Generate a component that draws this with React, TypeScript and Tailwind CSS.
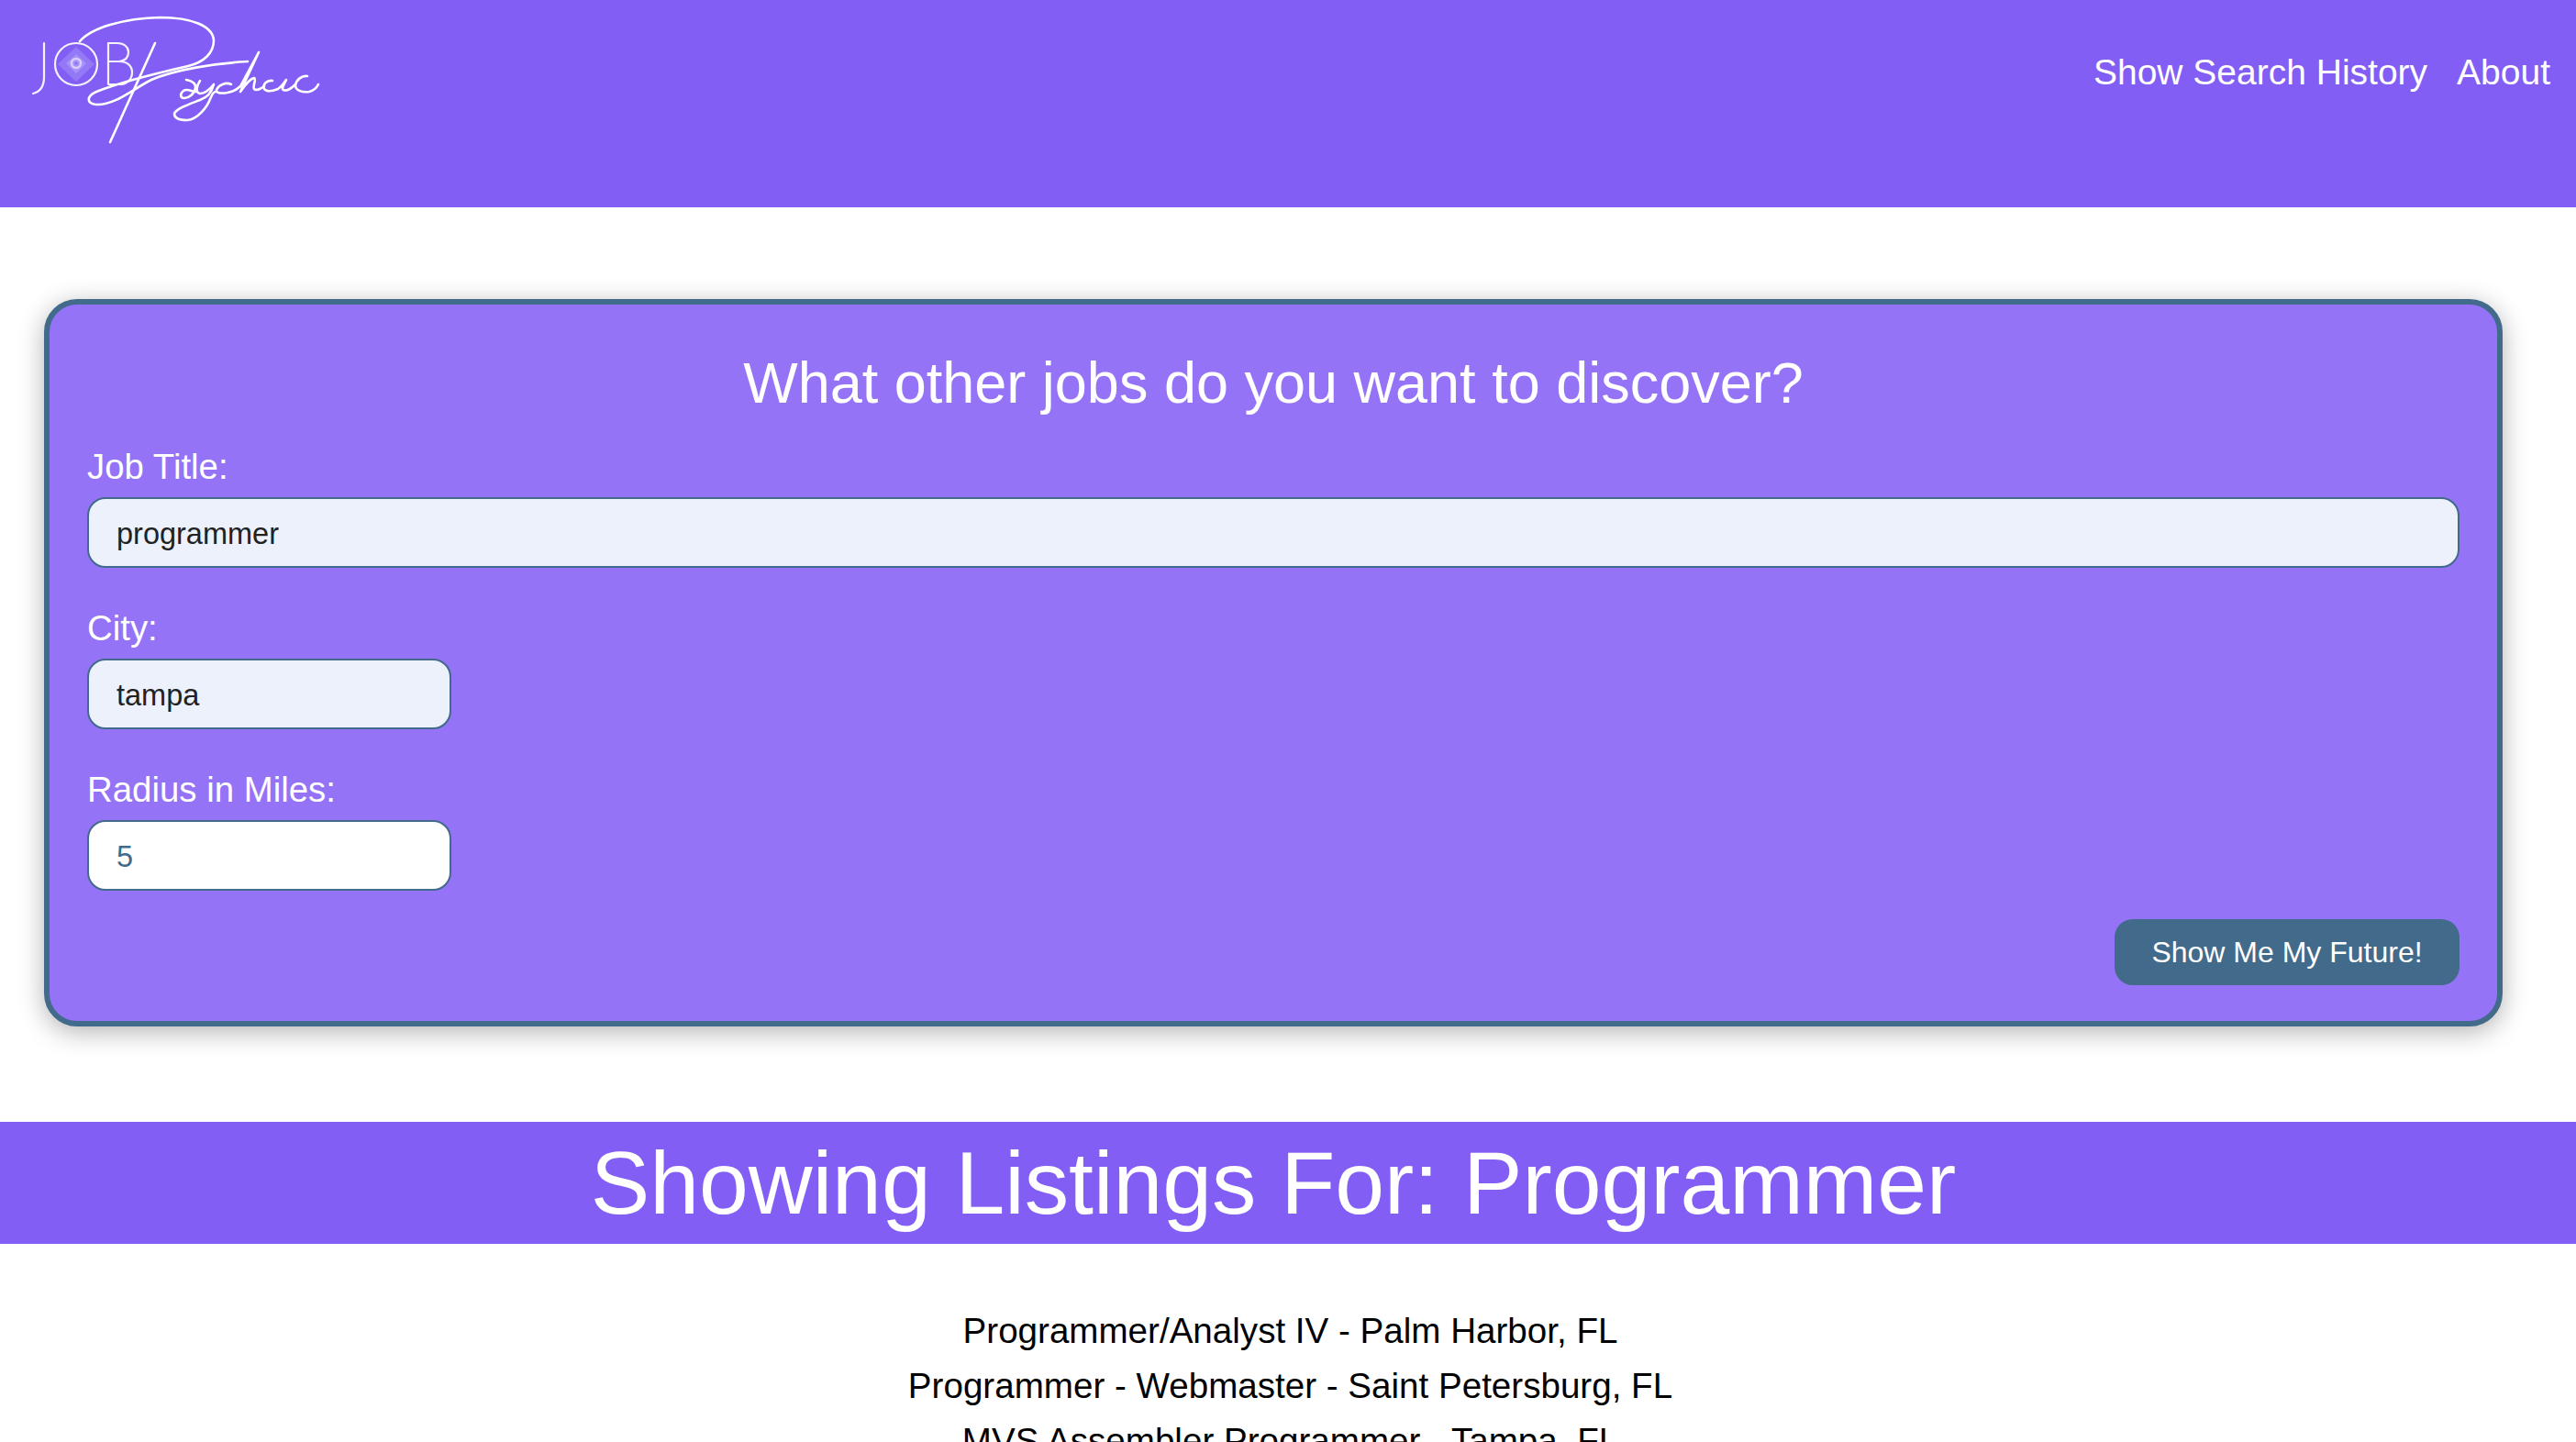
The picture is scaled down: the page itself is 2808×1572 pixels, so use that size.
const jobs = [
  "Programmer/Analyst IV - Palm Harbor, FL",
  "Programmer - Webmaster - Saint Petersburg, FL",
  "MVS Assembler Programmer - Tampa, FL",
];

function Logo() {
  return (
    <svg width="400" height="180" viewBox="0 0 400 180" fill="none" stroke="#ffffff" strokeLinecap="round" strokeLinejoin="round" className="shrink-0 blur-[0.4px]">
      <path d="M83 51 L103 70 L83 89 L63 70 Z" fill="#9479f6" stroke="none" />
      <path d="M83 59 L94 69 L83 80 L72 69 Z" fill="#a892f9" stroke="none" />
      <circle cx="83" cy="69" r="5" stroke="#d8cdfd" strokeWidth="2.4" />
      <circle cx="83" cy="69" r="1.5" fill="#8a6cf6" stroke="none" />
      <g strokeWidth="2.2" opacity="0.92">
        <path d="M48 47 V84 C48 94 44 100 36 102" />
        <circle cx="83" cy="70" r="23" />
        <path d="M118 47 V92 H130 C139 92 144 86 144 79 C144 72 139 67 130 67 H118 M130 67 C137 66 140 62 140 57 C140 51 135 47 128 47 H118" />
      </g>
      <g strokeWidth="2.6">
        <path d="M87 45 C100 30 135 20 175 19 C208 19 232 28 233 44 C233 58 222 68 205 72 C170 80 130 90 105 100 C94 105 94 113 105 114 C125 115 145 97 165 87 C190 76 235 69 270 67" />
        <path d="M169 47 L120 155" />
        <path d="M203 87 C209 88 214 91 213 96 C212 102 206 107 201 107 C196 107 196 102 200 99 C204 96 209 100 214 100" />
        <path d="M218 88 C214 94 213 101 218 102 C224 102 229 97 233 92 C231 100 227 106 218 109 C208 113 192 118 190 124 C190 130 198 131 204 131 C216 130 226 116 229 108 C231 104 232 100 235 100" />
        <path d="M252 92 C246 89 238 93 236 98 C235 102 242 102 248 101 C254 100 259 97 262 94 L282 57 L262 100 C267 93 272 86 277 85 C280 86 275 94 277 97 C279 99 284 97 288 94" />
        <path d="M297 88 C291 87 286 92 288 97 C291 101 298 99 303 97 C306 95 310 90 312 87 C310 92 306 97 309 98 C313 100 318 96 322 92" />
        <path d="M335 83 C329 82 323 87 322 93 C322 99 330 101 337 100 C341 99 345 96 347 92" />
      </g>
    </svg>
  );
}

function Field({ label, value, className }: { label: string; value: string; className: string }) {
  return (
    <div className="mb-[37px]">
      <label className="mb-[5px] block text-[38.4px] leading-[57px] text-white">{label}</label>
      <input
        readOnly
        value={value}
        className={`block h-[77px] rounded-[20px] border-2 border-[#426a8a] px-[30px] pt-[4px] text-[32.5px] outline-none ${className}`}
      />
    </div>
  );
}

export default function App() {
  return (
    <div className="h-screen overflow-hidden bg-white font-['Liberation_Sans',Arial,sans-serif]">
      <header className="flex h-[226px] items-start justify-between bg-[#835ef4] pr-[28px]">
        <Logo />
        <nav className="flex gap-[32px] pt-[54px] text-[39px] leading-[50px] text-white">
          <a>Show Search History</a>
          <a>About</a>
        </nav>
      </header>

      <section className="mx-[48px] mb-[104px] mt-[100px] w-[2680px] rounded-[36px] border-[6px] border-[#426a8a] bg-[#9573f7] px-[41px] pb-[39px] pt-[41px] shadow-[0_6px_28px_rgba(0,0,0,0.3)]">
        <h2 className="mb-[19px] text-center text-[63px] leading-[88px] text-white">What other jobs do you want to discover?</h2>
        <Field label="Job Title:" value="programmer" className="w-full bg-[#ecf1fc] text-[#222222]" />
        <Field label="City:" value="tampa" className="w-[397px] bg-[#ecf1fc] text-[#222222]" />
        <Field label="Radius in Miles:" value="5" className="w-[397px] bg-white text-[#426a8a]" />
        <div className="-mt-[6px] flex justify-end">
          <button className="h-[72px] w-[376px] rounded-[20px] bg-[#426a8a] text-[32px] text-white">Show Me My Future!</button>
        </div>
      </section>

      <h1 className="h-[133px] bg-[#835ef4] pr-[32px] text-center text-[96.7px] leading-[133px] text-white">Showing Listings For: Programmer</h1>

      <ul className="pl-[5px] pt-[65px] text-center text-[38.6px] leading-[60px] text-black">
        {jobs.map((job) => (
          <li key={job}>{job}</li>
        ))}
      </ul>
    </div>
  );
}
